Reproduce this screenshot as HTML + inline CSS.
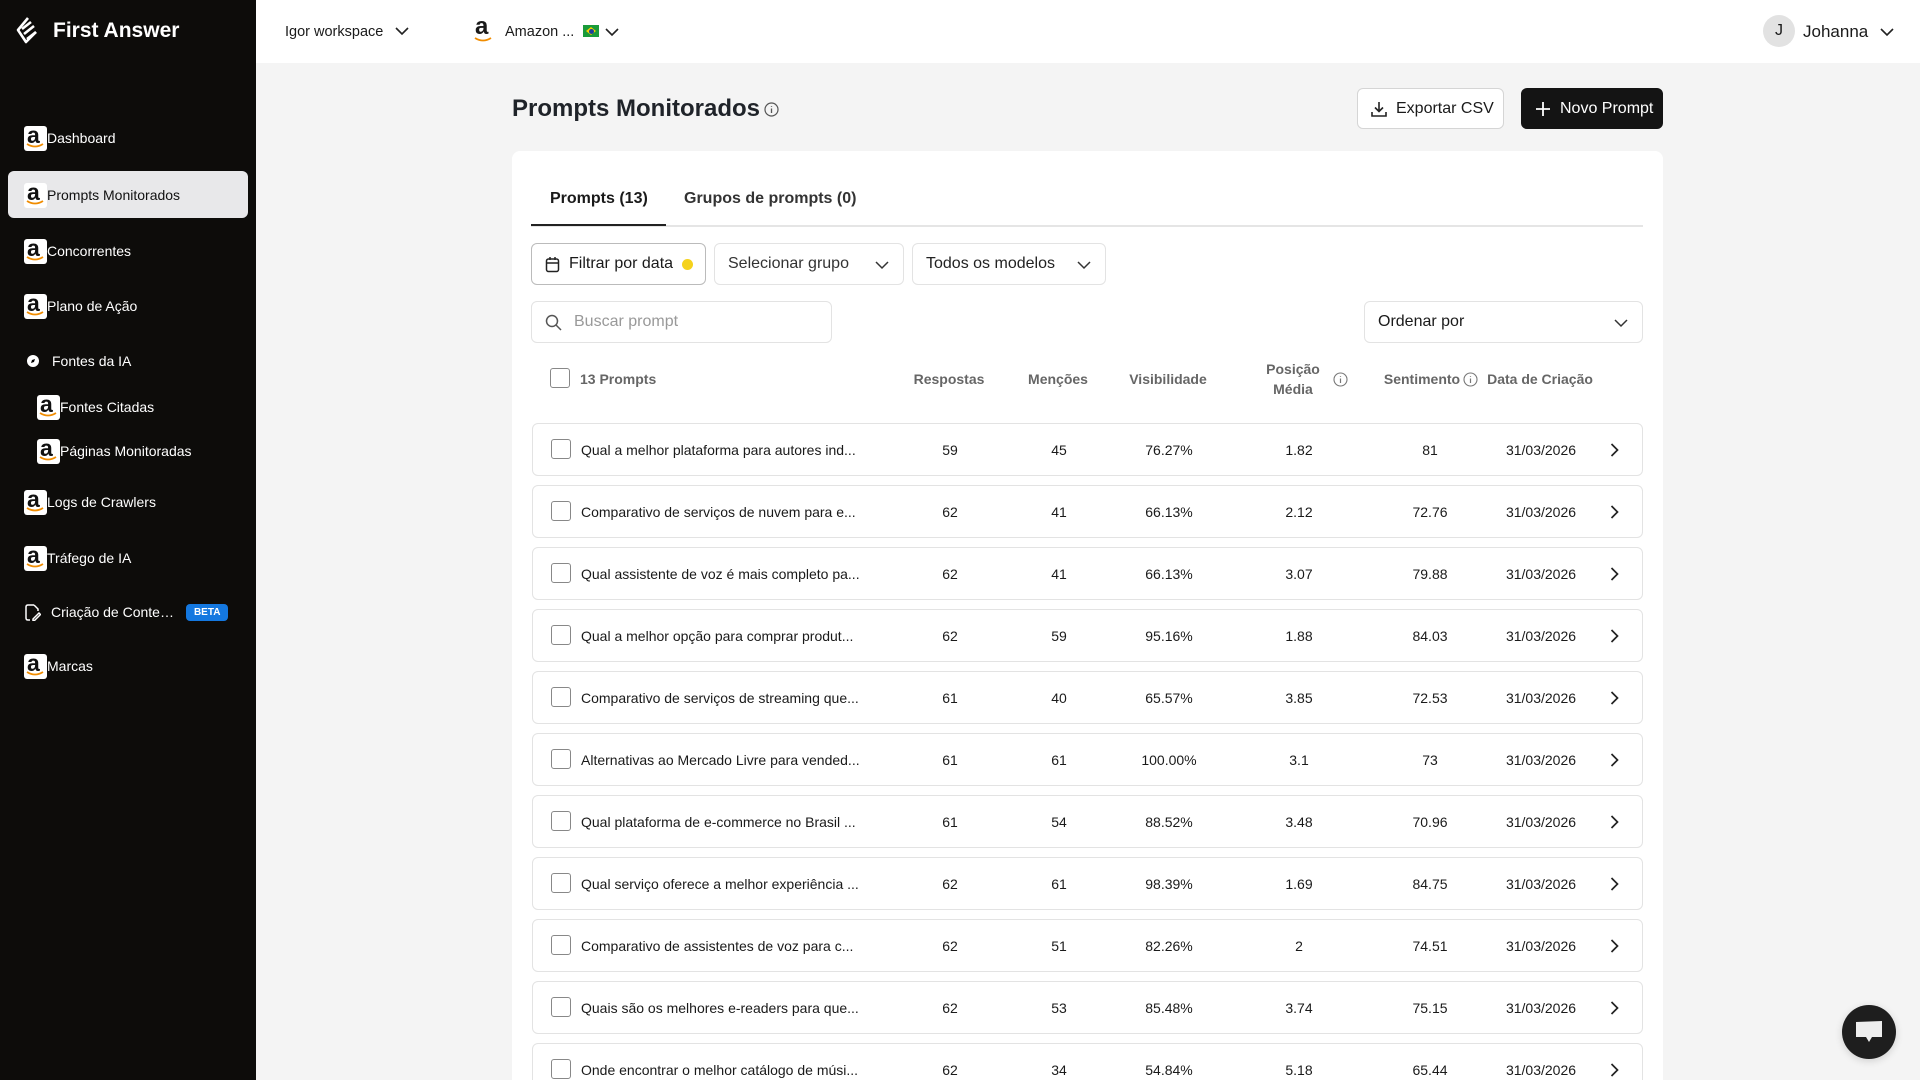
<!DOCTYPE html>
<html><head><meta charset="utf-8"><style>
*{box-sizing:border-box;margin:0;padding:0}
html{width:1920px;height:1080px;overflow:hidden}
body{width:1920px;height:1080px;overflow:hidden;background:#f4f4f4;font-family:"Liberation Sans",sans-serif;color:#1a1a1a;position:relative}
.abs{position:absolute}
#side{left:0;top:0;width:256px;height:1080px;background:#0d0c0a;color:#fff}
.nav{position:absolute;left:24px;display:flex;align-items:center;font-size:14px;color:#fff;height:24px;transform:translateY(-50%)}
.az{width:23px;height:25px;background:#fff;border-radius:3px;position:relative;display:inline-block;flex:none}
.az b{position:absolute;left:3px;top:-4px;font:bold 23px "Liberation Sans",sans-serif;color:#111}
.az svg{position:absolute;left:2px;bottom:2px}
#top{left:256px;top:0;width:1664px;height:63px;background:#fff}
.btn{position:absolute;border:1px solid #d5d5d5;border-radius:6px;background:#fff;display:flex;align-items:center;font-size:16px}
.card{left:512px;top:151px;width:1151px;height:929px;background:#fff;border-radius:8px 8px 0 0}
.row{position:absolute;left:532px;width:1111px;height:53px;border:1px solid #e3e3e3;border-radius:6px;background:#fff;font-size:14px}
.row span{position:absolute;top:50%;transform:translate(-50%,-50%);white-space:nowrap}
.row .t{transform:translateY(-50%);left:48px}
.cb{position:absolute;width:20px;height:20px;border:1.5px solid #888;border-radius:3px;background:#fff}
.hd{position:absolute;font-size:14px;font-weight:bold;color:#666;transform:translate(-50%,-50%);text-align:center;line-height:20px}
</style></head><body>
<div id="side" class="abs">
 <svg class="abs" style="left:14px;top:16px" width="26" height="30" viewBox="0 0 26 30" fill="none" stroke="#fff" stroke-width="2.6" stroke-linejoin="round"><path d="M14 2 L4 14 L12 26 L22 16"/><path d="M8 13 L17 6"/><path d="M10 18 L20 10"/><path d="M13 23 L22 16"/></svg>
 <div class="abs" style="left:53px;top:19px;font-size:21px;font-weight:bold">First Answer</div>
 <div class="abs" style="left:8px;top:171px;width:240px;height:47px;background:#e8e8ea;border-radius:6px"></div>
 <div class="nav" style="top:138px"><i class="az"><b>a</b><svg width="18" height="6"><path d="M1 1 Q9 6 17 1" stroke="#f08c00" stroke-width="1.8" fill="none"/></svg></i>Dashboard</div>
 <div class="nav" style="top:195px;color:#111"><i class="az"><b>a</b><svg width="18" height="6"><path d="M1 1 Q9 6 17 1" stroke="#f08c00" stroke-width="1.8" fill="none"/></svg></i>Prompts Monitorados</div>
 <div class="nav" style="top:251px"><i class="az"><b>a</b><svg width="18" height="6"><path d="M1 1 Q9 6 17 1" stroke="#f08c00" stroke-width="1.8" fill="none"/></svg></i>Concorrentes</div>
 <div class="nav" style="top:306px"><i class="az"><b>a</b><svg width="18" height="6"><path d="M1 1 Q9 6 17 1" stroke="#f08c00" stroke-width="1.8" fill="none"/></svg></i>Plano de Ação</div>
 <div class="nav" style="top:361px;left:26px"><svg width="14" height="14" style="margin-right:12px"><circle cx="7" cy="7" r="6" fill="#fff"/><path d="M5 9 L6 6 L9 5 L8 8Z" fill="#000"/></svg>Fontes da IA</div>
 <div class="nav" style="top:407px;left:37px"><i class="az"><b>a</b><svg width="18" height="6"><path d="M1 1 Q9 6 17 1" stroke="#f08c00" stroke-width="1.8" fill="none"/></svg></i>Fontes Citadas</div>
 <div class="nav" style="top:451px;left:37px"><i class="az"><b>a</b><svg width="18" height="6"><path d="M1 1 Q9 6 17 1" stroke="#f08c00" stroke-width="1.8" fill="none"/></svg></i>Páginas Monitoradas</div>
 <div class="nav" style="top:502px"><i class="az"><b>a</b><svg width="18" height="6"><path d="M1 1 Q9 6 17 1" stroke="#f08c00" stroke-width="1.8" fill="none"/></svg></i>Logs de Crawlers</div>
 <div class="nav" style="top:558px"><i class="az"><b>a</b><svg width="18" height="6"><path d="M1 1 Q9 6 17 1" stroke="#f08c00" stroke-width="1.8" fill="none"/></svg></i>Tráfego de IA</div>
 <div class="nav" style="top:612px;left:25px"><svg width="16" height="17" style="margin-right:10px" fill="none" stroke="#fff" stroke-width="1.5"><path d="M9 1 H3 Q1 1 1 3 V14 Q1 16 3 16 H5"/><path d="M9 1 L13 5 V7"/><path d="M8 15 L14 9 L15.5 10.5 L9.5 16.5 H8Z"/></svg>Criação de Conte…<span style="margin-left:12px;background:#1478e0;border-radius:4px;font-size:10px;font-weight:bold;padding:3px 8px">BETA</span></div>
 <div class="nav" style="top:666px"><i class="az"><b>a</b><svg width="18" height="6"><path d="M1 1 Q9 6 17 1" stroke="#f08c00" stroke-width="1.8" fill="none"/></svg></i>Marcas</div>
</div>
<div id="top" class="abs">
 <div class="abs" style="left:29px;top:24px;font-size:14.5px">Igor workspace</div>
 <svg class="abs" style="left:139px;top:27px" width="14" height="9"><path d="M1 1 L7 7 L13 1" stroke="#222" stroke-width="1.6" fill="none"/></svg>
 <div class="abs" style="left:219px;top:15px;font:bold 24px 'Liberation Sans',sans-serif;line-height:24px">a</div>
 <svg class="abs" style="left:218px;top:37px" width="18" height="6"><path d="M1 1 Q9 6 17 1" stroke="#f08c00" stroke-width="1.8" fill="none"/></svg>
 <div class="abs" style="left:249px;top:24px;font-size:14.5px">Amazon ...</div>
 <div class="abs" style="left:327px;top:25px;width:16px;height:12px;background:#1a9b3a"><div style="position:absolute;left:3px;top:2px;width:10px;height:8px;background:#f5d000;clip-path:polygon(50% 0,100% 50%,50% 100%,0 50%)"></div><div style="position:absolute;left:5.5px;top:3.5px;width:5px;height:5px;border-radius:50%;background:#1d3f9a"></div></div>
 <svg class="abs" style="left:349px;top:28px" width="14" height="9"><path d="M1 1 L7 7 L13 1" stroke="#222" stroke-width="1.6" fill="none"/></svg>
 <div class="abs" style="left:1507px;top:15px;width:32px;height:32px;border-radius:50%;background:#e2e2e2;font-size:16px;text-align:center;line-height:32px">J</div>
 <div class="abs" style="left:1547px;top:22px;font-size:17px">Johanna</div>
 <svg class="abs" style="left:1624px;top:28px" width="14" height="9"><path d="M1 1 L7 7 L13 1" stroke="#222" stroke-width="1.6" fill="none"/></svg>
</div>
<div class="abs" style="left:512px;top:95px;font-size:24px;font-weight:bold;color:#1f2329">Prompts Monitorados</div>
<svg class="abs" style="left:764px;top:102px" width="15" height="15"><circle cx="7.5" cy="7.5" r="6.5" stroke="#555" fill="none" stroke-width="1.2"/><path d="M7.5 6.5V11M7.5 4V4.8" stroke="#555" stroke-width="1.3"/></svg>
<div class="btn" style="left:1357px;top:88px;width:147px;height:41px;padding-left:12px"><svg width="18" height="18" style="margin-right:8px" fill="none" stroke="#222" stroke-width="1.6"><path d="M9 2V11M5 7.5L9 11.5L13 7.5M2 12V16H16V12"/></svg>Exportar CSV</div>
<div class="btn" style="left:1521px;top:88px;width:142px;height:41px;background:#141414;border-color:#141414;color:#fff;padding-left:13px"><svg width="16" height="16" style="margin-right:9px" stroke="#fff" stroke-width="1.8"><path d="M8 1V15M1 8H15"/></svg>Novo Prompt</div>
<div class="card abs"></div>
<div class="abs" style="left:550px;top:190px;font-size:16px;font-weight:bold">Prompts (13)</div>
<div class="abs" style="left:684px;top:190px;font-size:16px;font-weight:bold;color:#333">Grupos de prompts (0)</div>
<div class="abs" style="left:531px;top:225px;width:1112px;height:2px;background:#e5e5e5"></div>
<div class="abs" style="left:531px;top:224px;width:135px;height:2px;background:#222"></div>
<div class="btn" style="left:531px;top:243px;width:175px;height:42px;border-color:#bbb;padding-left:13px"><svg width="15" height="17" style="margin-right:9px" fill="none" stroke="#222" stroke-width="1.5"><rect x="1.5" y="3" width="12" height="12.5" rx="2"/><path d="M1.5 7H13.5M5 1V4M10 1V4"/></svg>Filtrar por data<span style="width:11px;height:11px;border-radius:50%;background:#f5d21c;margin-left:9px"></span></div>
<div class="btn" style="left:714px;top:243px;width:190px;height:42px;border-color:#e3e3e3;padding-left:13px;color:#333">Selecionar grupo<svg class="abs" style="right:14px;top:17px" width="14" height="9"><path d="M1 1L7 7L13 1" stroke="#333" stroke-width="1.5" fill="none"/></svg></div>
<div class="btn" style="left:912px;top:243px;width:194px;height:42px;border-color:#e3e3e3;padding-left:13px;color:#222">Todos os modelos<svg class="abs" style="right:14px;top:17px" width="14" height="9"><path d="M1 1L7 7L13 1" stroke="#333" stroke-width="1.5" fill="none"/></svg></div>
<div class="btn" style="left:531px;top:301px;width:301px;height:42px;border-color:#e3e3e3;padding-left:13px;color:#999"><svg width="17" height="17" style="margin-right:12px" fill="none" stroke="#555" stroke-width="1.5"><circle cx="7" cy="7" r="5.5"/><path d="M11 11L16 16"/></svg>Buscar prompt</div>
<div class="btn" style="left:1364px;top:301px;width:279px;height:42px;border-color:#e3e3e3;padding-left:13px">Ordenar por<svg class="abs" style="right:14px;top:17px" width="14" height="9"><path d="M1 1L7 7L13 1" stroke="#333" stroke-width="1.5" fill="none"/></svg></div>
<div class="cb" style="left:550px;top:368px"></div>
<div class="abs" style="left:580px;top:371px;font-size:14px;font-weight:bold;color:#666">13 Prompts</div>
<div class="hd" style="left:949px;top:379px">Respostas</div>
<div class="hd" style="left:1058px;top:379px">Menções</div>
<div class="hd" style="left:1168px;top:379px">Visibilidade</div>
<div class="hd" style="left:1293px;top:379px">Posição<br>Média</div>
<svg class="abs" style="left:1333px;top:372px" width="15" height="15"><circle cx="7.5" cy="7.5" r="6.5" stroke="#777" fill="none" stroke-width="1.1"/><path d="M7.5 6.5V11M7.5 4V4.8" stroke="#777" stroke-width="1.2"/></svg>
<div class="hd" style="left:1422px;top:379px">Sentimento</div>
<svg class="abs" style="left:1463px;top:372px" width="15" height="15"><circle cx="7.5" cy="7.5" r="6.5" stroke="#777" fill="none" stroke-width="1.1"/><path d="M7.5 6.5V11M7.5 4V4.8" stroke="#777" stroke-width="1.2"/></svg>
<div class="hd" style="left:1540px;top:379px">Data de Criação</div>
<div id="rows"></div>
<div class="abs" style="left:1842px;top:1005px;width:54px;height:54px;border-radius:50%;background:#1e1e1e;box-shadow:0 2px 8px rgba(0,0,0,.15)"><svg class="abs" style="left:12px;top:14px" width="30" height="26"><path d="M2 3 L28 2 L28 18 L18 18 L15 23 L12 18 L2 18Z" fill="#eee"/></svg></div>
<script>
var d=[["Qual a melhor plataforma para autores ind...",59,45,"76.27%","1.82","81"],["Comparativo de serviços de nuvem para e...",62,41,"66.13%","2.12","72.76"],["Qual assistente de voz é mais completo pa...",62,41,"66.13%","3.07","79.88"],["Qual a melhor opção para comprar produt...",62,59,"95.16%","1.88","84.03"],["Comparativo de serviços de streaming que...",61,40,"65.57%","3.85","72.53"],["Alternativas ao Mercado Livre para vended...",61,61,"100.00%","3.1","73"],["Qual plataforma de e-commerce no Brasil ...",61,54,"88.52%","3.48","70.96"],["Qual serviço oferece a melhor experiência ...",62,61,"98.39%","1.69","84.75"],["Comparativo de assistentes de voz para c...",62,51,"82.26%","2","74.51"],["Quais são os melhores e-readers para que...",62,53,"85.48%","3.74","75.15"],["Onde encontrar o melhor catálogo de músi...",62,34,"54.84%","5.18","65.44"]];
var h="";d.forEach(function(r,i){var t=423+62*i;h+='<div class="row" style="top:'+t+'px"><div class="cb" style="left:18px;top:15px"></div><span class="t">'+r[0]+'</span><span style="left:417px">'+r[1]+'</span><span style="left:526px">'+r[2]+'</span><span style="left:636px">'+r[3]+'</span><span style="left:766px">'+r[4]+'</span><span style="left:897px">'+r[5]+'</span><span style="left:1008px">31/03/2026</span><svg style="position:absolute;left:1077px;top:19px" width="9" height="14"><path d="M1.5 1L7.5 7L1.5 13" stroke="#222" stroke-width="1.7" fill="none"/></svg></div>'});
document.getElementById("rows").innerHTML=h;
</script>
</body></html>
